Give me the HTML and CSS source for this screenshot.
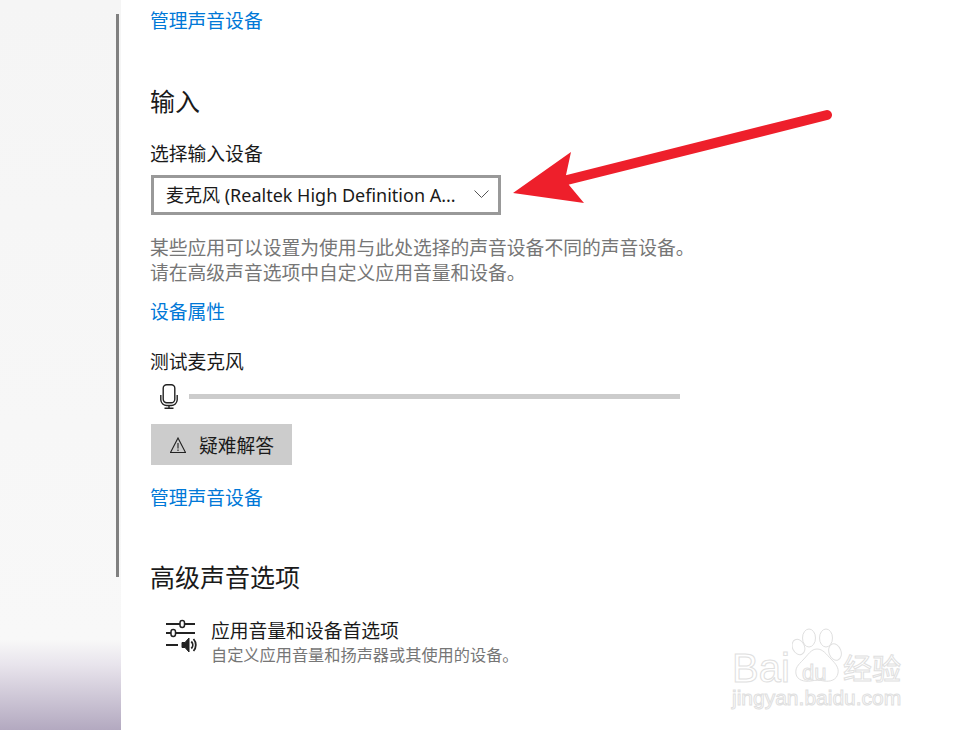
FILE: index.html
```html
<!DOCTYPE html>
<html lang="zh-CN">
<head>
  <meta charset="UTF-8">
  <title>声音设置</title>
  <link rel="stylesheet" href="styles.css">
</head>
<body>
  <div class="window">
    <div class="sidebar">
      <div class="scrollbar"></div>
    </div>

    <div class="content">
      <a class="link link-top">管理声音设备</a>

      <h2 class="heading heading-input">输入</h2>
      <div class="label">选择输入设备</div>
      <div class="select">
        <span>麦克风 (Realtek High Definition A...</span>
        <svg class="chevron" width="15" height="8" viewBox="0 0 15 8"><path d="M.5.5 7.500 7.500 14.500.5" fill="none" stroke="#555" stroke-width="1"/></svg>
      </div>
      <p class="hint">某些应用可以设置为使用与此处选择的声音设备不同的声音设备。<br>请在高级声音选项中自定义应用音量和设备。</p>
      <a class="link link-props">设备属性</a>

      <div class="label label-test">测试麦克风</div>
      <div class="mic-row">
        <svg class="mic" width="18" height="25" viewBox="0 0 18 25" fill="none" stroke="#222" stroke-width="1.400">
          <rect x="3.200" y=".7" width="11.600" height="18" rx="3.500"/>
          <path d="M.8 11v5a6 6 0 0 0 6 5.500h4.400a6 6 0 0 0 6-5.500v-5M9 21.500v3M4.500 24.300h9"/>
        </svg>
        <div class="meter"></div>
      </div>
      <button class="trouble">
        <svg width="16" height="16" viewBox="0 0 16 16" fill="none" stroke="#222" stroke-width="1.100">
          <path d="M8 1 15.500 15.500H.5z"/>
          <path d="M8 6v5.500M8 12.500V14"/>
        </svg>
        <span>疑难解答</span>
      </button>
      <a class="link link-bottom">管理声音设备</a>

      <h2 class="heading heading-advanced">高级声音选项</h2>
      <div class="option">
        <svg class="option-icon" width="32" height="36" viewBox="0 0 32 36" fill="none" stroke="#222" stroke-width="2">
          <path d="M1 6h14M20 6h10M1 15h5M11 15h19M1 27h12"/>
          <rect x="15" y="2.500" width="4.500" height="7" rx="2.200" stroke-width="1.500"/>
          <rect x="6" y="11.500" width="4.500" height="7" rx="2.200" stroke-width="1.500"/>
          <path d="M17 24.500h3l4-4.500v14l-4-4.500h-3z" fill="#222" stroke-width="1"/>
          <path d="M26.300 23.500a5 5 0 0 1 0 7M28.500 21a9 9 0 0 1 0 12" stroke-width="1.800"/>
        </svg>
        <div>
          <div class="option-title">应用音量和设备首选项</div>
          <div class="option-desc">自定义应用音量和扬声器或其使用的设备。</div>
        </div>
      </div>
    </div>
  </div>

  <!-- arrow drawn over the screenshot -->
  <svg class="arrow" width="350" height="110" viewBox="0 0 350 110">
    <path d="M332 12 72 77" stroke="#ee1f2b" stroke-width="10" stroke-linecap="round" fill="none"/>
    <path d="M18 90 76 49 71 72 74 82 89 100z" fill="#ee1f2b"/>
  </svg>

  <div class="watermark">
    <svg class="paw" width="50" height="56" viewBox="0 0 50 56" fill="#fff" stroke="#e0e0e0">
      <ellipse cx="6.500" cy="19" rx="6" ry="8" transform="rotate(-25 6.500 19)"/>
      <ellipse cx="17" cy="10" rx="6.500" ry="9"/>
      <ellipse cx="34" cy="10" rx="6.500" ry="9"/>
      <ellipse cx="43" cy="24" rx="6" ry="8.500" transform="rotate(-20 43 24)"/>
      <path d="M25 21c6 0 9 5 14 10 5 5 8 9 7 14-1 7-8 9-14 8-4-1-9-1-13 0-7 1-14-1-15-7-1-6 2-9 7-14 5-5 8-11 14-11z"/>
    </svg>
    <div class="wm-bai">Bai</div>
    <div class="wm-du">du</div>
    <div class="wm-jy">经验</div>
    <div class="wm-url">jingyan.baidu.com</div>
  </div>
</body>
</html>
```

FILE: styles.css
```css
* {
  box-sizing: border-box;
}
html, body {
  margin: 0;
  height: 100%;
}
body {
  width: 955px;
  height: 730px;
  overflow: hidden;
  position: relative;
  background-color: #fff;
  font-family: "Noto Sans CJK SC", "Noto Sans", sans-serif;
  color: #1a1a1a;
}
.window {
  display: flex;
  height: 730px;
}
.sidebar {
  width: 121px;
  flex: none;
  padding: 14px 2px 0 116px;
  background: linear-gradient(to bottom, #f5f5f5 0, #f8f8f8 640px, #e8e4ec 665px, #b3a9c0 730px);
}
.scrollbar {
  width: 3px;
  height: 563px;
  background-color: #808080;
}
.content {
  flex: 1;
  padding: 7px 0 0 30px;
}
.link, .heading, .label, .hint {
  margin-left: -1px;
}
.link {
  display: block;
  color: #0078d7;
  font-size: 18.800px;
  line-height: 26px;
}
.heading {
  margin-top: 0;
  margin-bottom: 0;
  font-weight: 400;
  font-size: 25px;
  line-height: 34px;
  color: #1a1a1a;
}
.heading-input {
  margin-top: 50px;
}
.label {
  font-size: 18.800px;
  line-height: 26px;
  margin-top: 23px;
}
.select {
  width: 350px;
  height: 40px;
  margin-top: 9px;
  padding: 0 9px 2px 12px;
  border: 3px solid #999;
  display: flex;
  align-items: center;
  justify-content: space-between;
  font-size: 18px;
}
.select span {
  font-family: "Noto Sans", "Noto Sans CJK SC", sans-serif;
  white-space: nowrap;
}
.hint {
  margin-top: 19px;
  margin-bottom: 0;
  font-size: 18.800px;
  line-height: 25px;
  color: #767676;
}
.link-props {
  margin-top: 14px;
}
.label-test {
  margin-top: 24px;
}
.mic-row {
  display: flex;
  align-items: center;
  gap: 11px;
  width: 529px;
  margin-top: 10px;
  padding-left: 9px;
}
.meter {
  flex: 1;
  height: 5px;
  background-color: #ccc;
}
.trouble {
  display: flex;
  align-items: center;
  gap: 13px;
  width: 141px;
  height: 41px;
  margin-top: 15px;
  padding: 0 0 0 19px;
  border: none;
  background-color: #ccc;
  font-family: inherit;
  font-size: 18.800px;
  color: #1a1a1a;
}
.link-bottom {
  margin-top: 19px;
}
.heading-advanced {
  margin-top: 49px;
}
.option {
  display: flex;
  align-items: flex-start;
  gap: 14px;
  margin-top: 25px;
  padding-left: 14px;
}
.option-title {
  font-size: 18.800px;
  line-height: 24px;
}
.option-desc {
  font-size: 16.200px;
  line-height: 18px;
  margin-top: 3px;
  color: #767676;
}
.arrow {
  position: absolute;
  left: 495px;
  top: 103px;
}
.watermark {
  position: absolute;
  left: 732px;
  top: 627px;
  width: 180px;
  height: 90px;
  color: #fff;
  -webkit-text-stroke: 1px #e0e0e0;
  white-space: nowrap;
}
.paw {
  position: absolute;
  left: 60px;
  top: 1px;
}
.wm-bai {
  position: absolute;
  left: 0;
  top: 18px;
  font-family: "Liberation Sans", sans-serif;
  font-size: 40px;
  line-height: 46px;
}
.wm-du {
  position: absolute;
  left: 70px;
  top: 33px;
  font-family: "Liberation Sans", sans-serif;
  font-size: 22px;
  line-height: 26px;
}
.wm-jy {
  position: absolute;
  left: 111px;
  top: 20px;
  font-family: "Noto Sans CJK SC", sans-serif;
  font-size: 29px;
  line-height: 40px;
}
.wm-url {
  position: absolute;
  left: 0;
  top: 57px;
  font-family: "Liberation Sans", sans-serif;
  font-size: 21px;
  line-height: 28px;
}
```
